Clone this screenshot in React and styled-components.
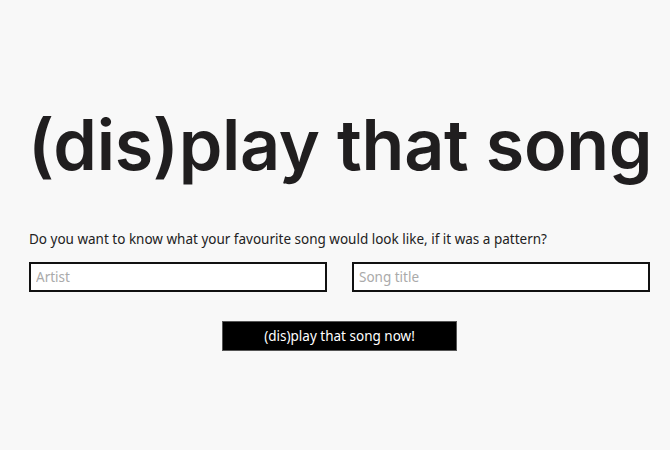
import React from 'react';
import styled, { createGlobalStyle } from 'styled-components';

const Global = createGlobalStyle`
  html, body {
    margin: 0;
    padding: 0;
    background: #f8f8f8;
    font-family: "Noto Sans", "Open Sans", sans-serif;
    color: #222;
  }
`;

const Page = styled.main`
  width: 621px;
  margin-left: 29px;
  padding-top: 101px;
  box-sizing: border-box;
`;

const Title = styled.h1`
  margin: 0 0 0 -1px;
  font-family: Inter, "Noto Sans", sans-serif;
  font-weight: 600;
  font-size: 70px;
  line-height: 88px;
  letter-spacing: -0.3px;
  color: #201e1f;
  white-space: nowrap;
`;

const Question = styled.p`
  margin: 40px 0 13px;
  font-size: 13.5px;
  line-height: 20px;
`;

const Fields = styled.div`
  display: flex;
  gap: 25px;
`;

const Field = styled.input`
  flex: 1;
  min-width: 0;
  height: 30px;
  box-sizing: border-box;
  border: 2px solid #111;
  background: #fff;
  padding: 0 5px;
  font-family: "Noto Sans", sans-serif;
  font-size: 13.5px;
  color: #222;
  outline: none;
  &::placeholder {
    color: #aaa;
  }
`;

const Actions = styled.div`
  display: flex;
  justify-content: center;
  margin-top: 29px;
`;

const Submit = styled.button`
  width: 235px;
  height: 30px;
  border: 1px solid #555;
  background: #000;
  color: #fff;
  font-family: "Noto Sans", sans-serif;
  font-size: 13.5px;
  cursor: pointer;
`;

export default function App() {
  return (
    <>
      <Global />
      <Page>
        <Title>(dis)play that song</Title>
        <Question>Do you want to know what your favourite song would look like, if it was a pattern?</Question>
        <Fields>
          <Field placeholder="Artist" />
          <Field placeholder="Song title" />
        </Fields>
        <Actions>
          <Submit>(dis)play that song now!</Submit>
        </Actions>
      </Page>
    </>
  );
}
